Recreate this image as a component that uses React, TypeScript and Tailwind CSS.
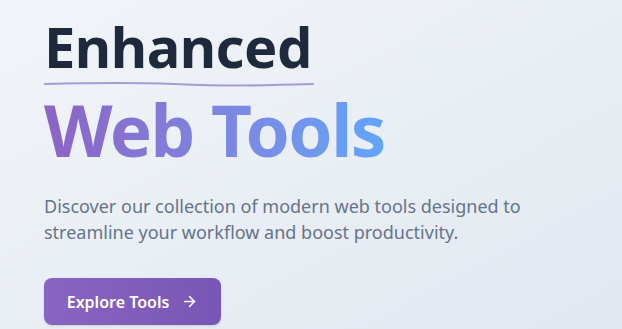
import { ArrowRight } from "lucide-react";

export default function App() {
  return (
    <div className="h-[329px] w-[622px] overflow-hidden bg-gradient-to-br from-[#f1f5f9] to-[#e2e8f0] px-[44px] font-['Noto_Sans',sans-serif]">
      <div className="flex flex-col items-start pt-[14px]">
        <div className="flex flex-col">
          <h1 className="text-[56px] font-bold leading-[64px] tracking-[-0.5px] text-[#1e293b]">
            Enhanced
          </h1>
          <svg
            className="mt-[2px] h-[8px] w-full"
            viewBox="0 0 270 8"
            preserveAspectRatio="none"
            fill="none"
          >
            <path
              d="M1 4 C 40 3, 80 2, 130 4 S 200 6, 230 5 S 260 4, 269 4"
              stroke="#a99bd1"
              strokeWidth="2.2"
              strokeLinecap="round"
            />
          </svg>
        </div>
        <h2 className="bg-gradient-to-r from-[#8b63c6] to-[#60a5fa] bg-clip-text text-[71px] font-bold leading-[84px] tracking-[-1.5px] text-transparent">
          Web Tools
        </h2>
        <p className="mt-[21px] text-[18px] leading-[26px] text-[#64748b]">
          Discover our collection of modern web tools designed to
          <br />
          streamline your workflow and boost productivity.
        </p>
        <button className="mt-[33px] flex h-[47px] w-[177px] items-center justify-center gap-[12px] rounded-[8px] bg-gradient-to-r from-[#8b64c2] to-[#7856b5] text-[16px] font-semibold text-white shadow-sm">
          Explore Tools
          <ArrowRight className="h-[17px] w-[17px]" strokeWidth={2.2} />
        </button>
      </div>
    </div>
  );
}
